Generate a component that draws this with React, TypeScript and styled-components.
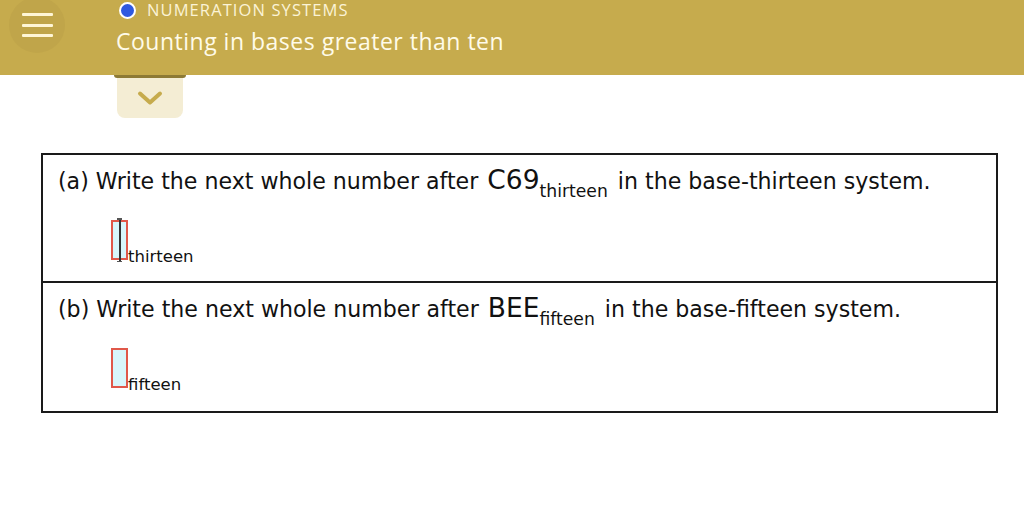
import * as React from 'react';
import styled, { createGlobalStyle } from 'styled-components';

const GlobalStyle = createGlobalStyle`
  html, body {
    margin: 0;
    padding: 0;
    background: #ffffff;
    width: 1024px;
    height: 512px;
    overflow: hidden;
  }
`;

const Page = styled.div`
  width: 1024px;
  height: 512px;
  display: flex;
  flex-direction: column;
`;

const Header = styled.header`
  height: 75px;
  background: #c6ab4d;
  display: flex;
  align-items: flex-start;
  padding-left: 9px;
  box-sizing: border-box;
`;

const MenuButton = styled.div`
  width: 56px;
  height: 56px;
  margin-top: -3px;
  border-radius: 50%;
  background: #c0a54a;
  display: flex;
  flex-direction: column;
  align-items: center;
  justify-content: center;
  gap: 7.5px;
`;

const MenuLine = styled.span`
  width: 31px;
  height: 3px;
  border-radius: 1px;
  background: #fff6d6;
`;

const Titles = styled.div`
  margin-left: 51px;
  display: flex;
  flex-direction: column;
  font-family: 'Open Sans', 'Liberation Sans', sans-serif;
  color: #fffbe9;
`;

const Topic = styled.div`
  display: flex;
  align-items: center;
  gap: 11px;
  margin-left: 3px;
  padding-top: 1px;
  font-size: 16.5px;
  line-height: 18px;
  letter-spacing: 1.1px;
  color: #fbf3d6;
`;

const Dot = styled.span`
  width: 17px;
  height: 17px;
  border-radius: 50%;
  background: #2f59e0;
  border: 2px solid #ffffff;
  box-sizing: border-box;
`;

const Title = styled.div`
  font-size: 23px;
  font-weight: 500;
  line-height: 28px;
  margin-top: 8px;
  letter-spacing: 0.5px;
`;

const TabWrap = styled.div`
  margin-left: 114px;
  width: 72px;
  display: flex;
  flex-direction: column;
  align-items: center;
`;

const TabBar = styled.div`
  width: 72px;
  height: 3px;
  background: #8d7a35;
  border-radius: 0 0 3px 3px;
`;

const Tab = styled.div`
  width: 66px;
  height: 40px;
  background: #f4edd4;
  border-radius: 0 0 8px 8px;
  display: flex;
  align-items: center;
  justify-content: center;
`;

const Table = styled.div`
  margin: 35px 0 0 41px;
  width: 957px;
  border: 2px solid #1a1a1a;
  box-sizing: border-box;
  font-family: 'DejaVu Sans', Verdana, sans-serif;
  color: #111;
`;

const Part = styled.div<{ $last?: boolean }>`
  height: 128px;
  box-sizing: border-box;
  padding: 10px 0 0 15px;
  border-bottom: ${(p) => (p.$last ? 'none' : '2px solid #1a1a1a')};
`;

const Question = styled.div`
  font-size: 22.1px;
  line-height: 30px;
  white-space: nowrap;
`;

const Big = styled.span`
  font-size: 26.5px;
  margin-left: 2px;
`;

const Sub = styled.sub`
  font-size: 17.2px;
  vertical-align: -8px;
  line-height: 0;
  margin-right: 3px;
`;

const AnswerRow = styled.div`
  display: flex;
  align-items: flex-end;
  margin: 24px 0 0 53px;
`;

const AnswerBox = styled.div`
  position: relative;
  width: 17px;
  height: 40px;
  box-sizing: border-box;
  border: 2px solid #e0584a;
  background: #d8f6fb;
`;

const Caret = styled.span`
  position: absolute;
  left: 6px;
  top: -4px;
  bottom: -4px;
  width: 1.5px;
  background: #333;
  &::before,
  &::after {
    content: '';
    position: absolute;
    left: -2px;
    width: 5px;
    height: 1.5px;
    background: #555;
  }
  &::before { top: 0; }
  &::after { bottom: 0; }
`;

const BaseLabel = styled.span`
  font-size: 16.5px;
  line-height: 16px;
  margin-bottom: -5px;
`;

export default function App() {
  return (
    <Page>
      <GlobalStyle />
      <Header>
        <MenuButton>
          <MenuLine />
          <MenuLine />
          <MenuLine />
        </MenuButton>
        <Titles>
          <Topic>
            <Dot />
            NUMERATION SYSTEMS
          </Topic>
          <Title>Counting in bases greater than ten</Title>
        </Titles>
      </Header>
      <TabWrap>
        <TabBar />
        <Tab>
          <svg width="26" height="16" viewBox="0 0 26 16">
            <path d="M3 3.5 L13 12.5 L23 3.5" fill="none" stroke="#c6ab4d" strokeWidth="4" strokeLinecap="round" strokeLinejoin="round" />
          </svg>
        </Tab>
      </TabWrap>
      <Table>
        <Part>
          <Question>
            (a) Write the next whole number after <Big>C69</Big>
            <Sub>thirteen</Sub> in the base-thirteen system.
          </Question>
          <AnswerRow>
            <AnswerBox>
              <Caret />
            </AnswerBox>
            <BaseLabel>thirteen</BaseLabel>
          </AnswerRow>
        </Part>
        <Part $last>
          <Question>
            (b) Write the next whole number after <Big>BEE</Big>
            <Sub>fifteen</Sub> in the base-fifteen system.
          </Question>
          <AnswerRow>
            <AnswerBox />
            <BaseLabel>fifteen</BaseLabel>
          </AnswerRow>
        </Part>
      </Table>
    </Page>
  );
}
